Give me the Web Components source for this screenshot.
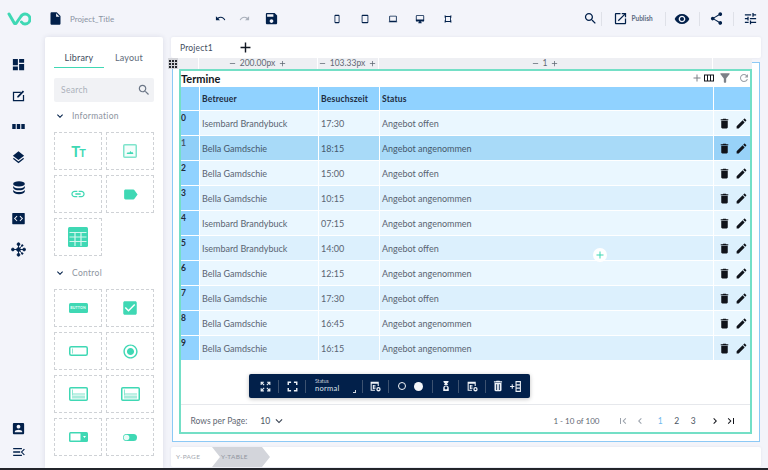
<!DOCTYPE html>
<html lang="en">
<head>
<meta charset="utf-8">
<title>Project_Title</title>
<style>
  html, body { margin: 0; height: 100%; overflow: hidden; background: #f3f4fa; }
  body { font-family: "Lato", "Open Sans", sans-serif; color: #02204a; }
  app-shell { width: 768px; height: 470px; }
</style>
</head>
<body>
<app-shell></app-shell>

<script>
// Material style icon paths, shared by all components
const ICONS = {
  file: 'M6 2c-1.1 0-1.99.9-1.99 2L4 20c0 1.1.89 2 1.99 2H18c1.1 0 2-.9 2-2V8l-6-6H6zm7 7V3.5L18.5 9H13z',
  undo: 'M12.5 8c-2.65 0-5.05.99-6.9 2.6L2 7v9h9l-3.62-3.62c1.39-1.16 3.16-1.88 5.12-1.88 3.54 0 6.55 2.31 7.6 5.5l2.37-.78C21.08 11.03 17.15 8 12.5 8z',
  redo: 'M18.4 10.6C16.55 8.99 14.15 8 11.5 8c-4.65 0-8.58 3.03-9.96 7.22L3.9 16c1.05-3.19 4.05-5.5 7.6-5.5 1.95 0 3.73.72 5.12 1.88L13 16h9V7l-3.6 3.6z',
  save: 'M17 3H5c-1.11 0-2 .9-2 2v14c0 1.1.89 2 2 2h14c1.1 0 2-.9 2-2V7l-4-4zm-5 16c-1.66 0-3-1.34-3-3s1.34-3 3-3 3 1.34 3 3-1.34 3-3 3zm3-10H5V5h10v4z',
  search: 'M15.5 14h-.79l-.28-.27C15.41 12.59 16 11.11 16 9.5 16 5.91 13.09 3 9.5 3S3 5.91 3 9.5 5.91 16 9.5 16c1.61 0 3.09-.59 4.23-1.57l.27.28v.79l5 4.99L20.49 19l-4.99-5zm-6 0C7.01 14 5 11.99 5 9.5S7.01 5 9.5 5 14 7.01 14 9.5 11.99 14 9.5 14z',
  publish: 'M19 19H5V5h7V3H5c-1.11 0-2 .9-2 2v14c0 1.1.89 2 2 2h14c1.1 0 2-.9 2-2v-7h-2v7zM14 3v2h3.59l-9.83 9.83 1.41 1.41L19 6.41V10h2V3h-7z',
  eye: 'M12 4.5C7 4.5 2.73 7.61 1 12c1.73 4.39 6 7.5 11 7.5s9.27-3.11 11-7.5c-1.73-4.39-6-7.5-11-7.5zM12 17c-2.76 0-5-2.24-5-5s2.24-5 5-5 5 2.24 5 5-2.24 5-5 5zm0-8c-1.66 0-3 1.34-3 3s1.34 3 3 3 3-1.34 3-3-1.34-3-3-3z',
  share: 'M18 16.08c-.76 0-1.44.3-1.96.77L8.91 12.7c.05-.23.09-.46.09-.7s-.04-.47-.09-.7l7.05-4.11c.54.5 1.25.81 2.04.81 1.66 0 3-1.34 3-3s-1.34-3-3-3-3 1.34-3 3c0 .24.04.47.09.7L8.04 9.81C7.5 9.31 6.79 9 6 9c-1.66 0-3 1.34-3 3s1.34 3 3 3c.79 0 1.5-.31 2.04-.81l7.12 4.16c-.05.21-.08.43-.08.65 0 1.61 1.31 2.92 2.92 2.92 1.61 0 2.92-1.31 2.92-2.92s-1.31-2.92-2.92-2.92z',
  tune: 'M3 17v2h6v-2H3zM3 5v2h10V5H3zm10 16v-2h8v-2h-8v-2h-2v6h2zM7 9v2H3v2h4v2h2V9H7zm14 4v-2H11v2h10zm-6-4h2V7h4V5h-4V3h-2v6z',
  trash: 'M6 19c0 1.1.9 2 2 2h8c1.1 0 2-.9 2-2V7H6v12zM19 4h-3.5l-1-1h-5l-1 1H5v2h14V4z',
  trashline: 'M6 19c0 1.1.9 2 2 2h8c1.1 0 2-.9 2-2V7H6v12zm3-10h1.500v10H9V9zm4.500 0H15v10h-1.500V9zM19 4h-3.500l-1-1h-5l-1 1H5v2h14V4z',
  edit: 'M3 17.25V21h3.75L17.81 9.94l-3.75-3.75L3 17.25zM20.71 7.04c.39-.39.39-1.02 0-1.41l-2.34-2.34c-.39-.39-1.02-.39-1.41 0l-1.83 1.83 3.75 3.75 1.83-1.83z',
  filter: 'M4.25 5.61C6.27 8.2 10 13 10 13v6c0 .55.45 1 1 1h2c.55 0 1-.45 1-1v-6s3.72-4.8 5.74-7.39c.51-.66.04-1.61-.79-1.61H5.04c-.83 0-1.3.95-.79 1.61z',
  refresh: 'M17.65 6.35C16.2 4.9 14.21 4 12 4c-4.42 0-7.99 3.58-7.99 8s3.57 8 7.99 8c3.73 0 6.84-2.55 7.73-6h-2.08c-.82 2.33-3.04 4-5.65 4-3.31 0-6-2.69-6-6s2.69-6 6-6c1.66 0 3.14.69 4.22 1.78L13 11h7V4l-2.35 2.35z',
  columns: 'M2 5h20v14H2V5zm2 2v10h4V7H4zm6 0v10h4V7h-4zm6 0v10h4V7h-4z',
  add: 'M19 13h-6v6h-2v-6H5v-2h6V5h2v6h6v2z',
  remove: 'M19 13H5v-2h14v2z',
  down: 'M7.41 8.59L12 13.17l4.59-4.58L18 10l-6 6-6-6z',
  first: 'M18.41 16.59L13.82 12l4.59-4.59L17 6l-6 6 6 6zM6 6h2v12H6z',
  last: 'M5.59 7.41L10.18 12l-4.59 4.59L7 18l6-6-6-6zM16 6h2v12h-2z',
  prev: 'M15.41 7.41L14 6l-6 6 6 6 1.41-1.41L10.83 12z',
  next: 'M10 6L8.59 7.41 13.17 12l-4.58 4.59L10 18l6-6z',
  dashboard: 'M3 13h8V3H3v10zm0 8h8v-6H3v6zm10 0h8V11h-8v10zm0-18v6h8V3h-8z',
  note: 'M3 6h13v2H5v11h14v-8h2v10H3V6zm7 7l9-9 2 2-9 9H10v-2z',
  dots: 'M2 8h5.5v8H2V8zm7.25 0h5.5v8h-5.5V8zM16.5 8H22v8h-5.5V8z',
  layers: 'M11.99 18.54l-7.37-5.73L3 14.07l9 7 9-7-1.63-1.27-7.38 5.74zM12 16l7.36-5.73L21 9l-9-7-9 7 1.63 1.27L12 16z',
  code: 'M3 3h18a1 1 0 0 1 1 1v16a1 1 0 0 1-1 1H3a1 1 0 0 1-1-1V4a1 1 0 0 1 1-1zm7.3 5.6L9.2 7.5 4.7 12l4.5 4.5 1.1-1.1L6.9 12l3.4-3.4zm3.4 0l3.4 3.4-3.4 3.4 1.1 1.1 4.5-4.5-4.5-4.5-1.1 1.1z',
  account: 'M3 5v14c0 1.1.89 2 2 2h14c1.1 0 2-.9 2-2V5c0-1.1-.9-2-2-2H5c-1.11 0-2 .9-2 2zm12 4c0 1.66-1.34 3-3 3s-3-1.34-3-3 1.34-3 3-3 3 1.34 3 3zm-9 8c0-2 4-3.1 6-3.1s6 1.1 6 3.1v1H6v-1z',
  collapse: 'M2 5h15v2.2H2V5zm0 5.9h12v2.2H2v-2.2zm0 5.9h15V19H2v-2.2zM22 7.5L17.5 12l4.5 4.5-1.5 1.2L15 12l5.5-5.7L22 7.5z',
  phone: 'M8 2h8a2 2 0 0 1 2 2v16a2 2 0 0 1-2 2H8a2 2 0 0 1-2-2V4a2 2 0 0 1 2-2zm0 3v14h8V5H8z',
  tablet: 'M6 2h12a2 2 0 0 1 2 2v16a2 2 0 0 1-2 2H6a2 2 0 0 1-2-2V4a2 2 0 0 1 2-2zm0 3v14h12V5H6z',
  laptop: 'M5 4h14a2 2 0 0 1 2 2v10a2 2 0 0 1-2 2h3v2H2v-2h3a2 2 0 0 1-2-2V6a2 2 0 0 1 2-2zm0 2v10h14V6H5z',
  desktop: 'M4 3h16a2 2 0 0 1 2 2v11a2 2 0 0 1-2 2h-6v2h2v2H8v-2h2v-2H4a2 2 0 0 1-2-2V5a2 2 0 0 1 2-2zm0 2v8h16V5H4z',
  frame: 'M4 3h2v2h12V3h2v6h-1v6h1v6h-2v-2H6v2H4v-6h1V9H4V3zm3 4v10h10V7H7z',
  fit: 'M3 3h6v2H6.4l3.8 3.8-1.4 1.4L5 6.4V9H3V3zm12 0h6v6h-2V6.4l-3.8 3.8-1.4-1.4L17.6 5H15V3zM8.8 13.8l1.4 1.4L6.4 19H9v2H3v-6h2v2.6l3.8-3.8zm6.4 0l3.8 3.8V15h2v6h-6v-2h2.6l-3.8-3.8 1.4-1.4z',
  fullscreen: 'M7 14H5v5h5v-2H7v-3zm-2-4h2V7h3V5H5v5zm12 7h-3v2h5v-5h-2v3zM14 5v2h3v3h2V5h-5z',
  settings: 'M3 3h15v8h-2V7H5v11h6v2H3V3zm4 6h5v1.6H9v1.6h3v1.6H9v1.6h3V16.6H7V9zm10.5 4a4 4 0 1 1 0 8 4 4 0 0 1 0-8zm0 2.4a1.6 1.6 0 1 0 0 3.2 1.6 1.6 0 0 0 0-3.2z',
  person: 'M7 2h10v2l-3.2 4h1.7v2H8.5V8h1.7L7 4V2zm5 9a5.5 5.5 0 0 1 5.5 5.500V22H6.500v-5.500A5.500 5.500 0 0 1 12 11zm0 2.200a2.800 2.800 0 1 0 0 5.600 2.800 2.800 0 0 0 0-5.600z',
  addcol: 'M12 2h10v20H12V2zm2 2v4h6V4h-6zm0 6v4h6v-4h-6zm0 6v4h6v-4h-6zM2 11h3V8h2v3h3v2H7v3H5v-3H2v-2z',
  link: 'M3.9 12c0-1.71 1.39-3.1 3.1-3.1h4V7H7c-2.76 0-5 2.24-5 5s2.24 5 5 5h4v-1.9H7c-1.71 0-3.1-1.39-3.1-3.1zM8 13h8v-2H8v2zm9-6h-4v1.9h4c1.71 0 3.1 1.39 3.1 3.1s-1.39 3.1-3.1 3.1h-4V17h4c2.76 0 5-2.24 5-5s-2.24-5-5-5z',
  label: 'M17.63 5.84C17.27 5.33 16.67 5 16 5L5 5.01C3.9 5.01 3 5.9 3 7v10c0 1.1.9 1.99 2 1.99L16 19c.67 0 1.27-.33 1.63-.84L22 12l-4.37-6.16z',
  check: 'M19 3H5c-1.11 0-2 .9-2 2v14c0 1.1.89 2 2 2h14c1.11 0 2-.9 2-2V5c0-1.1-.89-2-2-2zm-9 14l-5-5 1.41-1.41L10 14.17l7.59-7.59L19 8l-9 9z',
  radio: 'M12 7c-2.76 0-5 2.24-5 5s2.24 5 5 5 5-2.24 5-5-2.24-5-5-5zm0-5C6.48 2 2 6.48 2 12s4.48 10 10 10 10-4.48 10-10S17.52 2 12 2zm0 18c-4.42 0-8-3.58-8-8s3.58-8 8-8 8 3.58 8 8-3.58 8-8 8z'
};

const TEAL = '#3fd8b4';
const NAVY = '#02204a';

function icon(name, size, color) {
  return `<svg width="${size}" height="${size}" viewBox="0 0 24 24" fill="${color || 'currentColor'}" style="display:block;flex:none"><path fill-rule="evenodd" d="${ICONS[name]}"/></svg>`;
}

/**
 * <top-bar> logo, project title, history, device sizes and publish actions.
 */
class TopBar extends HTMLElement {
  constructor() {
    super();
    this.attachShadow({ mode: 'open' });
  }

  connectedCallback() {
    const devices = ['phone', 'tablet', 'laptop', 'desktop', 'frame'];
    this.shadowRoot.innerHTML = `
      <style>
        :host { display: flex; align-items: center; height: 37px; color: ${NAVY}; }
        .logo { width: 47.500px; flex: none; padding-left: 7px; box-sizing: border-box; }
        .title { font-size: 8px; color: #8a93a3; margin-left: 7.500px; width: 144.500px; flex: none; }
        .group { display: flex; align-items: center; flex: none; }
        .history { width: 117.500px; }
        .devices { gap: 17.750px; }
        .actions { margin-left: auto; display: flex; align-items: center; padding-right: 10.500px; }
        .sep { width: 1px; height: 14px; background: #dfe1e8; flex: none; }
        .publish { font-size: 6.500px; font-weight: 700; color: #5c6a80; margin-left: 3.500px; width: 20px; }
      </style>
      <div class="logo">
        <svg width="24" height="14" viewBox="0 0 24 14" fill="none" stroke="${TEAL}" stroke-width="3" stroke-linecap="round" stroke-linejoin="round" style="display:block">
          <path d="M2 2l5.500 9.500h1.500L13.500 5c1.500-2.500 3-3 4.500-3a5 5 0 0 1 0 10c-1.500 0-2.500-.5-3.500-2"/>
        </svg>
      </div>
      ${icon('file', 15)}
      <span class="title">Project_Title</span>
      <div class="group history">
        ${icon('undo', 11)}
        <span style="margin-left:13px;color:#a9afba">${icon('redo', 11)}</span>
        <span style="margin-left:14px">${icon('save', 15)}</span>
      </div>
      <div class="group devices">
        ${devices.map(d => icon(d, 10)).join('')}
      </div>
      <div class="actions">
        ${icon('search', 15)}
        <span class="sep" style="margin:0 11.500px 0 3px"></span>
        ${icon('publish', 15)}
        <span class="publish">Publish</span>
        <span class="sep" style="margin:0 8px 0 13px"></span>
        ${icon('eye', 16)}
        <span class="sep" style="margin:0 9px"></span>
        ${icon('share', 15)}
        <span class="sep" style="margin:0 9px"></span>
        ${icon('tune', 15)}
      </div>
    `;
  }
}

/**
 * <side-rail> vertical icon navigation on the far left.
 */
class SideRail extends HTMLElement {
  constructor() {
    super();
    this.attachShadow({ mode: 'open' });
  }

  connectedCallback() {
    const db = `<svg width="14" height="14" viewBox="0 0 24 24" fill="currentColor" style="display:block"><ellipse cx="12" cy="5" rx="10" ry="4.500"/><path d="M2 8c1 3 5 4.500 10 4.500S21 11 22 8v3.500c-1 3-5 4.500-10 4.500S3 14.500 2 11.500z"/><path d="M2 15c1 3 5 4 10 4s9-1 10-4v3c-1 3-5 4.500-10 4.500S3 21 2 18z"/></svg>`;
    const hub = `<svg width="15" height="15" viewBox="0 0 24 24" fill="currentColor" stroke="currentColor" stroke-width="1.500" style="display:block"><circle cx="12" cy="12" r="3"/><circle cx="3" cy="12" r="2.200"/><circle cx="21" cy="12" r="2.200"/><circle cx="12" cy="3.500" r="2.200"/><circle cx="12" cy="20.500" r="2.200"/><circle cx="18" cy="5.500" r="1.200"/><circle cx="18" cy="18.500" r="1.200"/><path d="M3 12h18M12 3.500v17M12 12l6-6.500M12 12l6 6.500" fill="none"/></svg>`;
    this.shadowRoot.innerHTML = `
      <style>
        :host { display: flex; flex-direction: column; align-items: center; width: 37px; height: 431px; color: ${NAVY}; box-sizing: border-box; padding-top: 20px; }
        .top { display: flex; flex-direction: column; align-items: center; gap: 16px; }
        .bottom { margin-top: auto; margin-bottom: 9px; display: flex; flex-direction: column; align-items: center; gap: 9.500px; }
      </style>
      <div class="top">
        ${icon('dashboard', 15)}
        ${icon('note', 15)}
        ${icon('dots', 15)}
        ${icon('layers', 15)}
        ${db}
        ${icon('code', 15)}
        ${hub}
      </div>
      <div class="bottom">
        ${icon('account', 15)}
        ${icon('collapse', 14)}
      </div>
    `;
  }
}

/**
 * <lib-tile> one dashed widget tile in the library. Artwork goes in the slot.
 */
class LibTile extends HTMLElement {
  constructor() {
    super();
    this.attachShadow({ mode: 'open' });
    this.shadowRoot.innerHTML = `
      <style>
        :host { display: flex; align-items: center; justify-content: center; height: 38px; box-sizing: border-box; border: 1px dashed #cfd2d6; color: ${TEAL}; }
      </style>
      <slot></slot>
    `;
  }
}

/**
 * <lib-panel> Library / Layout tabs, search and the widget tile groups.
 */
class LibPanel extends HTMLElement {
  constructor() {
    super();
    this.attachShadow({ mode: 'open' });
  }

  connectedCallback() {
    const chevron = icon('down', 12, NAVY);
    const lines = `<svg width="19" height="14" viewBox="0 0 19 14" style="display:block"><rect x=".75" y=".75" width="17.500" height="12.500" rx="1" fill="#fff" stroke="${TEAL}" stroke-width="1.500"/><path d="M3.500 2.500v6" stroke="#8fe8d3"/><rect x="4" y="6.500" width="12" height="1" fill="#7fe4cc"/><rect x="3" y="8.500" width="13" height="3" fill="#a9ecdc"/></svg>`;
    const input = `<svg width="19" height="10" viewBox="0 0 19 10" style="display:block"><rect x=".75" y=".75" width="17.500" height="8.500" rx="1.500" fill="#fff" stroke="${TEAL}" stroke-width="1.500"/><path d="M3.500 2.500v5" stroke="#8fe8d3"/></svg>`;
    const image = `<svg width="14" height="14" viewBox="0 0 14 14" style="display:block"><rect x=".75" y=".75" width="12.500" height="12.500" rx="1" fill="#f4fdfb" stroke="#7fe4cc" stroke-width="1.500"/><path d="M3.500 10l1.500-2 1 1 1.500-2 1 1.500.8-.8 1.200 2.300z" fill="${TEAL}"/></svg>`;
    const select = `<svg width="19" height="10" viewBox="0 0 19 10" style="display:block"><rect width="19" height="10" rx="1.500" fill="${TEAL}"/><rect x="1.500" y="1.500" width="10" height="7" fill="#fff"/><path d="M14 4h3l-1.500 2z" fill="#fff"/></svg>`;
    const toggle = `<svg width="14" height="7" viewBox="0 0 14 7" style="display:block"><rect width="14" height="7" rx="3.500" fill="${TEAL}"/><circle cx="3.500" cy="3.500" r="2.800" fill="#eafbf7"/></svg>`;
    this.shadowRoot.innerHTML = `
      <style>
        :host { display: block; width: 118px; height: 431px; background: #fff; box-shadow: 0 0 5px rgba(40,50,90,.12); box-sizing: border-box; padding: 0 9px; border-radius: 2px 2px 0 0; font-size: 9px; }
        .tabs { display: flex; height: 31px; padding-top: 1px; box-sizing: border-box; }
        .tab { width: 50px; box-sizing: border-box; height: 30px; padding-top: 10px; text-align: center; line-height: 19px; color: #606b7a; font-size: 9px; letter-spacing: .2px; }
        .tab.on { border-bottom: 1px solid ${TEAL}; color: #3f4c5e; }
        .search { display: flex; align-items: center; justify-content: space-between; height: 24px; margin: 10px 0 3px; padding: 0 3px 0 7px; background: #f1f2f5; border-radius: 2px; color: #aab0ba; font-size: 8.500px; letter-spacing: .3px; }
        .search svg { color: #6b7686; }
        .head { display: flex; align-items: center; gap: 6px; height: 22px; margin-bottom: 5px; color: #8d94a0; font-size: 8.500px; letter-spacing: .3px; }
        .grid { display: grid; grid-template-columns: 48px 48px; gap: 5px 4px; }
        .gap { height: 6px; }
      </style>
      <div class="tabs">
        <div class="tab on">Library</div>
        <div class="tab">Layout</div>
      </div>
      <div class="search"><span>Search</span>${icon('search', 14)}</div>
      <div class="head">${chevron}<span>Information</span></div>
      <div class="grid">
        <lib-tile><span style="font:700 15px 'Lato',sans-serif;color:${TEAL};letter-spacing:-1px">T<span style="font-size:11px">T</span></span></lib-tile>
        <lib-tile>${image}</lib-tile>
        <lib-tile>${icon('link', 16)}</lib-tile>
        <lib-tile>${icon('label', 17)}</lib-tile>
        <lib-tile>
          <svg width="20" height="20" viewBox="0 0 20 20" style="display:block"><rect width="20" height="20" rx="1.500" fill="${TEAL}"/><path d="M1.500 5.500h17M1.500 10h17M1.500 14.500h17M7 5.500V19M13 5.500V19" stroke="#d5f7ee" stroke-width="1.200" fill="none"/></svg>
        </lib-tile>
      </div>
      <div class="gap"></div>
      <div class="head">${chevron}<span>Control</span></div>
      <div class="grid">
        <lib-tile><span style="display:block;width:19px;height:10px;border-radius:1.500px;background:${TEAL};color:#e8fff9;font:700 3.500px/10px 'Lato',sans-serif;text-align:center;letter-spacing:.2px">BUTTON</span></lib-tile>
        <lib-tile>${icon('check', 18)}</lib-tile>
        <lib-tile>${input}</lib-tile>
        <lib-tile>${icon('radio', 17)}</lib-tile>
        <lib-tile>${lines}</lib-tile>
        <lib-tile>${lines}</lib-tile>
        <lib-tile>${select}</lib-tile>
        <lib-tile>${toggle}</lib-tile>
      </div>
    `;
  }
}

/**
 * <data-grid> the "Termine" table with its rows and paging.
 */
class DataGrid extends HTMLElement {
  constructor() {
    super();
    this.attachShadow({ mode: 'open' });
  }

  get rows() {
    return [
      ['Isembard Brandybuck', '17:30', 'Angebot offen'],
      ['Bella Gamdschie', '18:15', 'Angebot angenommen'],
      ['Bella Gamdschie', '15:00', 'Angebot offen'],
      ['Bella Gamdschie', '10:15', 'Angebot angenommen'],
      ['Isembard Brandybuck', '07:15', 'Angebot angenommen'],
      ['Isembard Brandybuck', '14:00', 'Angebot offen'],
      ['Bella Gamdschie', '12:15', 'Angebot angenommen'],
      ['Bella Gamdschie', '17:30', 'Angebot offen'],
      ['Bella Gamdschie', '16:45', 'Angebot angenommen'],
      ['Bella Gamdschie', '16:15', 'Angebot angenommen']
    ];
  }

  connectedCallback() {
    const rowHtml = this.rows.map((r, i) => {
      const cls = i === 1 ? 'sel' : (i > 2 && i % 2 === 1 ? 'alt' : '');
      return `
        <div class="row ${cls}">
          <div class="idx">${i}</div>
          <div class="cell">${r[0]}</div>
          <div class="cell">${r[1]}</div>
          <div class="cell">${r[2]}</div>
          <div class="cell act">${icon('trash', 13, '#10131a')}${icon('edit', 13, '#10131a')}</div>
        </div>`;
    }).join('');

    this.shadowRoot.innerHTML = `
      <style>
        :host { display: flex; flex-direction: column; width: 573px; height: 365px; box-sizing: border-box; border: 2px solid #74dfc6; background: #fff; color: #5a6472; font-size: 9px; }
        .title { display: flex; align-items: center; height: 15px; box-sizing: border-box; padding-bottom: 1px; font-size: 11px; font-weight: 700; color: #111722; }
        .tools { margin-left: auto; display: flex; align-items: center; color: #7c8087; padding-right: 0; }
        .row { display: grid; grid-template-columns: 17.500px 118px 60px 333px 1fr; gap: 1px; height: 24px; margin-bottom: 1px; background: #fff; }
        .row > div { display: flex; align-items: center; padding-left: 2.500px; background: #eaf7ff; }
        .row .idx { background: #90d2ff; align-items: flex-start; padding: 3px 0 0 0; font-size: 8.500px; font-weight: 700; color: #222c3a; line-height: 1; }
        .row.alt > div { background: #dcf0fd; }
        .row.alt .idx, .row.sel .idx { background: #90d2ff; }
        .row.sel > div { background: #a8daf8; color: #45586c; }
        .row.sel .idx { background: #8fcff8; }
        .row.sel .act { background: #98d2f8; }
        .head { height: 23px; margin-top: 1px; margin-bottom: 1px; }
        .head > div { background: #90d2ff !important; color: #1d2c40; font-weight: 700; font-size: 8.500px; letter-spacing: .2px; }
        .row .act { gap: 4px; padding-left: 4px; }
        .spacer { flex: 1; }
        .foot { display: flex; align-items: center; height: 28px; box-sizing: border-box; border-top: 1px solid #e6e8ec; padding: 4px 13.500px 0 9.500px; font-size: 8.500px; color: #5f6873; }
        .size { margin-left: 13px; color: #4c5563; }
        .range { margin-left: auto; font-size: 8px; }
        .pager { display: flex; align-items: center; margin-left: 17px; color: #4c5563; }
        .pager .off { color: #9aa1ab; }
        .pager b { font-weight: 400; width: 16.500px; text-align: center; }
        .pager .cur { color: #6fb8ee; }
      </style>
      <div class="title">
        <span>Termine</span>
        <div class="tools">
          ${icon('add', 12)}
          <span style="color:#14161c">${icon('columns', 12)}</span>
          <span style="margin-left:3px">${icon('filter', 14)}</span>
          <span style="margin-left:6px;color:#9b9fa6">${icon('refresh', 12)}</span>
        </div>
      </div>
      <div class="row head">
        <div></div>
        <div>Betreuer</div>
        <div>Besuchszeit</div>
        <div>Status</div>
        <div></div>
      </div>
      ${rowHtml}
      <div class="spacer"></div>
      <div class="foot">
        <span>Rows per Page:</span>
        <span class="size">10</span>
        <span style="margin-left:2px">${icon('down', 14, '#3c4655')}</span>
        <span class="range">1 - 10 of 100</span>
        <div class="pager">
          <span class="off">${icon('first', 12)}</span>
          <span class="off" style="margin-left:5px">${icon('prev', 12)}</span>
          <b class="cur" style="margin-left:6.500px">1</b>
          <b>2</b>
          <b>3</b>
          <span style="margin-left:7px;color:#14161c">${icon('next', 12)}</span>
          <span style="margin-left:4px;color:#14161c">${icon('last', 12)}</span>
        </div>
      </div>
    `;
  }
}

/**
 * <float-bar> dark toolbar that floats over the selected table.
 */
class FloatBar extends HTMLElement {
  constructor() {
    super();
    this.attachShadow({ mode: 'open' });
  }

  connectedCallback() {
    const cell = (width, content, extra = '') =>
      `<div class="cell" style="width:${width}px;${extra}">${content}</div>`;
    this.shadowRoot.innerHTML = `
      <style>
        :host { position: absolute; display: flex; align-items: center; height: 24px; width: 281px; background: ${NAVY}; color: #eef2f7; border-radius: 2px; box-shadow: 0 1px 4px rgba(0,0,0,.25); }
        .cell { display: flex; align-items: center; justify-content: center; flex: none; box-sizing: border-box; height: 100%; }
        .sep { width: 1px; height: 13px; background: #3d5270; flex: none; }
        .status { width: 41px; position: relative; line-height: 1; flex: none; }
        .status small { display: block; font-size: 5px; color: #c6cfda; margin-bottom: 1px; }
        .status span { display: block; font-size: 7.500px; color: #dde4ec; letter-spacing: .3px; }
        .status i { position: absolute; right: 0; bottom: 0; width: 2px; height: 2px; border-right: 1px solid #cfd6e0; border-bottom: 1px solid #cfd6e0; }
        .ring { width: 6px; height: 6px; border: 1.500px solid #f4f6f9; border-radius: 50%; flex: none; }
        .dot { width: 9px; height: 9px; background: #f4f6f9; border-radius: 50%; margin-left: 7.500px; flex: none; }
      </style>
      ${cell(29, icon('fit', 13), 'padding-left:3px')}
      <span class="sep"></span>
      ${cell(26, icon('fullscreen', 17))}
      <span class="sep"></span>
      ${cell(56, '<div class="status"><small>Status</small><span>normal</span><i></i></div>', 'justify-content:flex-start;padding-left:9px')}
      <span class="sep"></span>
      ${cell(25, icon('settings', 13))}
      <span class="sep"></span>
      ${cell(43, '<span class="ring"></span><span class="dot"></span>')}
      <span class="sep"></span>
      ${cell(25, icon('person', 12))}
      <span class="sep"></span>
      ${cell(26, icon('settings', 13))}
      <span class="sep"></span>
      ${cell(40, icon('trashline', 14) + '<span style="margin-left:4px">' + icon('addcol', 13) + '</span>')}
    `;
  }
}

/**
 * <crumb-bar> breadcrumb path below the canvas. One <crumb-item> per level.
 */
class CrumbBar extends HTMLElement {
  constructor() {
    super();
    this.attachShadow({ mode: 'open' });
    this.shadowRoot.innerHTML = `
      <style>
        :host { display: flex; align-items: center; height: 20px; background: #fff; border-radius: 2px; box-shadow: 0 0 3px rgba(40,50,90,.08); box-sizing: border-box; padding: 0 0 0 3px; }
      </style>
      <slot></slot>
    `;
  }
}

class CrumbItem extends HTMLElement {
  constructor() {
    super();
    this.attachShadow({ mode: 'open' });
    this.shadowRoot.innerHTML = `
      <style>
        :host { display: block; height: 20px; line-height: 20px; width: 40px; padding-left: 2px; box-sizing: border-box; font-size: 6.500px; letter-spacing: .3px; color: #a4a8b0; }
        :host([active]) { background: #d3d5db; color: #9296a0; margin-left: -2px; padding-left: 9px; width: 58px; clip-path: polygon(0 0, 50px 0, 58px 50%, 50px 100%, 0 100%, 8px 50%); }
      </style>
      <slot></slot>
    `;
  }
}

/**
 * <canvas-area> tab strip, rulers, the selected table and the breadcrumb.
 */
class CanvasArea extends HTMLElement {
  constructor() {
    super();
    this.attachShadow({ mode: 'open' });
  }

  connectedCallback() {
    const ruler = (label) => `
      <div class="cell">${icon('remove', 9)}<span>${label}</span>${icon('add', 9)}</div>`;
    this.shadowRoot.innerHTML = `
      <style>
        :host { display: flex; flex-direction: column; position: relative; width: 592px; height: 431px; color: #5a6472; }
        .tabs { display: flex; align-items: center; height: 21px; flex: none; background: #fff; border-radius: 2px; box-shadow: 0 0 3px rgba(40,50,90,.08); padding-left: 9px; font-size: 8.500px; color: #3f4c5e; letter-spacing: .2px; margin-right: 2px; }
        .tabs svg { margin-left: 24px; color: #111722; }
        .ruler { display: flex; height: 11px; flex: none; margin: 0 11.500px 0 -3.500px; position: relative; z-index: 1; }
        .grip { width: 10px; margin-right: .5px; display: flex; align-items: center; justify-content: center; background: #d5d6db; flex: none; }
        .cols { flex: 1; display: grid; grid-template-columns: 19.500px 118px 60px 333px 1fr; gap: 1px; background: #fff; }
        .cols .cell { display: flex; align-items: center; justify-content: center; gap: 3px; background: #eeeff3; font-size: 8.500px; color: #5f6873; line-height: 1; }
        .stage { flex: none; height: 380px; margin: -7px 3px 0 1px; padding: 6px 0 0 6px; border: 1px solid #8cc9f5; box-sizing: border-box; background: #fff; }
        .crumb { margin: 5px 2px 0 0; flex: none; }
        float-bar { left: 78px; top: 337px; }
        .drop { position: absolute; left: 421.500px; top: 211px; width: 14px; height: 14px; border-radius: 50%; background: #fff; display: flex; align-items: center; justify-content: center; }
      </style>
      <div class="tabs">
        <span>Project1</span>
        ${icon('add', 17)}
      </div>
      <div class="ruler">
        <div class="grip">
          <svg width="8" height="8" viewBox="0 0 8 8" fill="#26282e"><path d="M0 0h2v2H0zM3 0h2v2H3zM6 0h2v2H6zM0 3h2v2H0zM3 3h2v2H3zM6 3h2v2H6zM0 6h2v2H0zM3 6h2v2H3zM6 6h2v2H6z"/></svg>
        </div>
        <div class="cols">
          <div class="cell"></div>
          ${ruler('200.00px')}
          ${ruler('103.33px')}
          ${ruler('1')}
          <div class="cell"></div>
        </div>
      </div>
      <div class="stage"><data-grid></data-grid></div>
      <crumb-bar class="crumb">
        <crumb-item>Y-PAGE</crumb-item>
        <crumb-item active>Y-TABLE</crumb-item>
      </crumb-bar>
      <float-bar></float-bar>
      <div class="drop">${icon('add', 12, TEAL)}</div>
    `;
  }
}

/**
 * <app-shell> overall page grid.
 */
class AppShell extends HTMLElement {
  constructor() {
    super();
    this.attachShadow({ mode: 'open' });
    this.shadowRoot.innerHTML = `
      <style>
        :host { display: grid; grid-template-columns: 37px 118px 1fr; grid-template-rows: 37px 431px 2px; overflow: hidden; }
        top-bar { grid-column: 1 / -1; }
        lib-panel { margin-left: 8px; }
        canvas-area { margin-left: 16px; }
        .edge { grid-column: 1 / -1; background: #23252b; }
      </style>
      <top-bar></top-bar>
      <side-rail></side-rail>
      <lib-panel></lib-panel>
      <canvas-area></canvas-area>
      <div class="edge"></div>
    `;
  }
}

customElements.define('top-bar', TopBar);
customElements.define('side-rail', SideRail);
customElements.define('lib-tile', LibTile);
customElements.define('lib-panel', LibPanel);
customElements.define('data-grid', DataGrid);
customElements.define('float-bar', FloatBar);
customElements.define('crumb-bar', CrumbBar);
customElements.define('crumb-item', CrumbItem);
customElements.define('canvas-area', CanvasArea);
customElements.define('app-shell', AppShell);
</script>
</body>
</html>
